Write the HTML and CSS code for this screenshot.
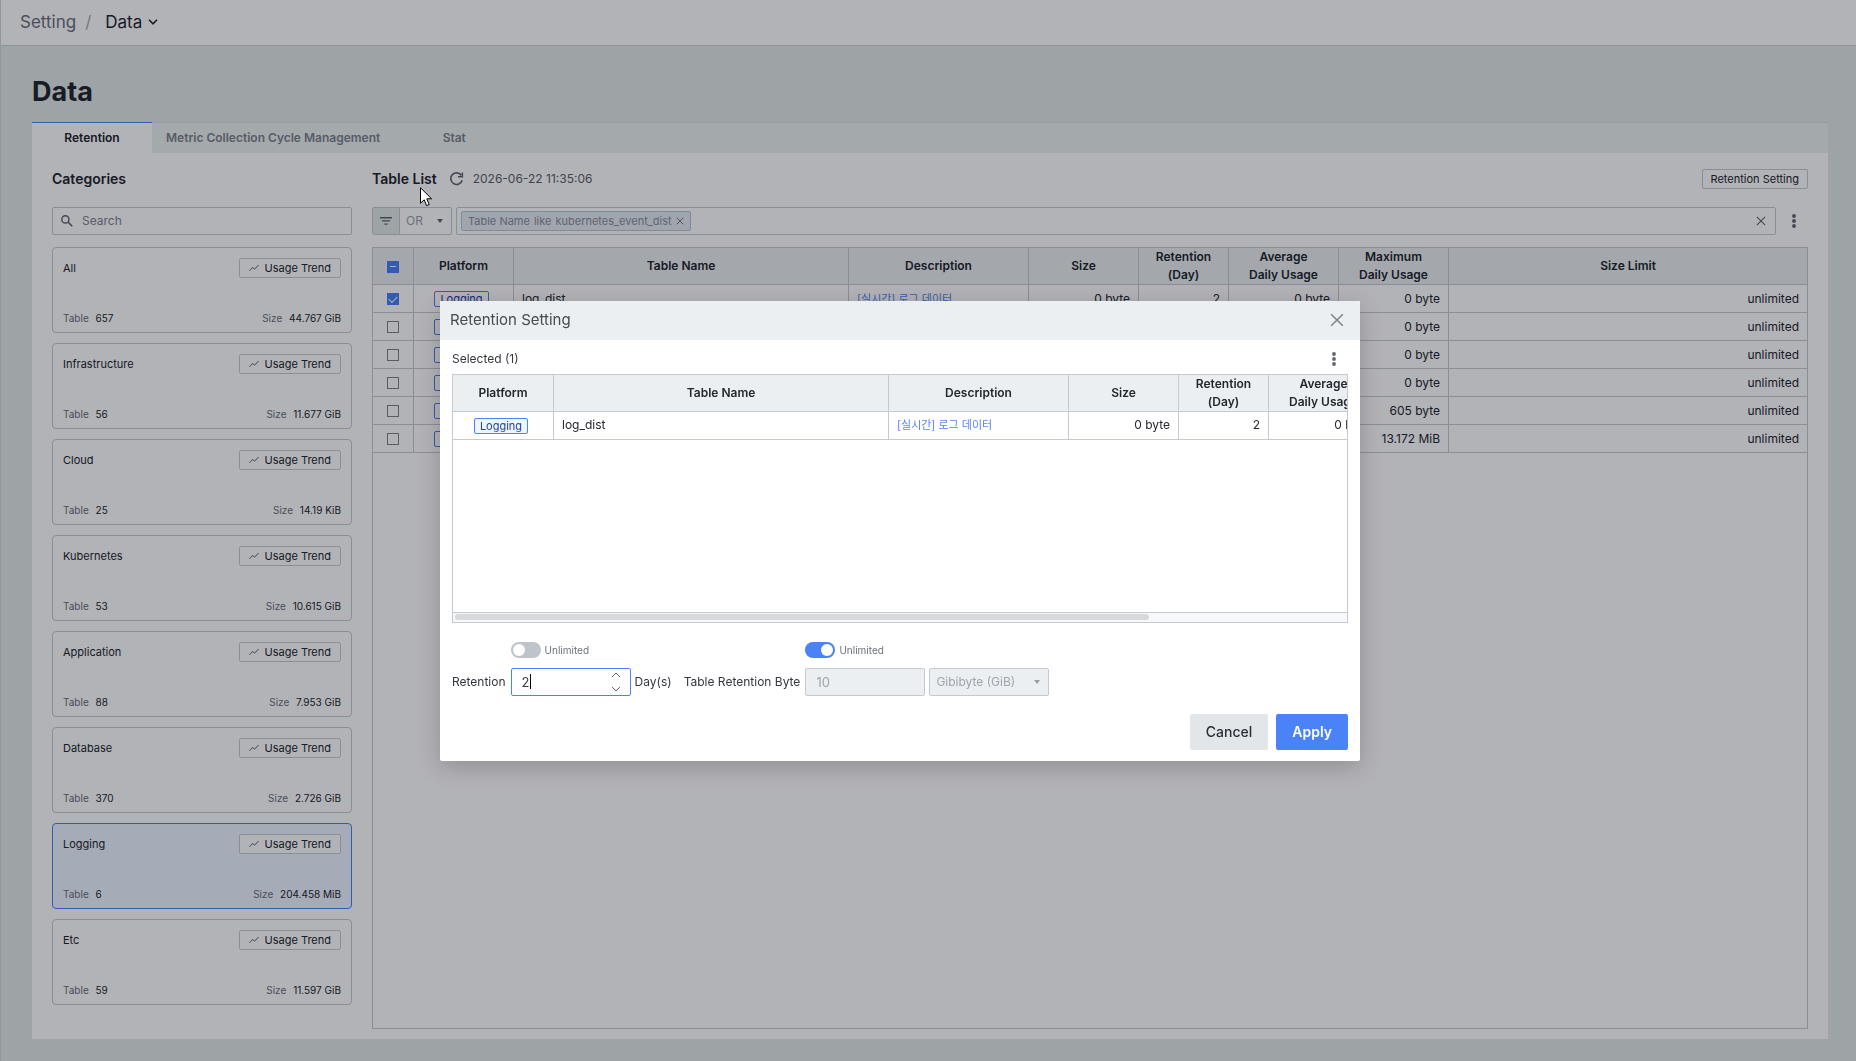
FILE: index.html
```html
<!DOCTYPE html>
<html lang="en">
<head>
  <meta charset="UTF-8">
  <meta name="viewport" content="width=device-width, initial-scale=1">
  <title>Setting / Data</title>
  <link rel="stylesheet" href="styles.css">
</head>
<body>

<svg class="symbols" aria-hidden="true">
  <symbol id="i-trend" viewBox="0 0 10 8"><path d="M0.5 6.8 L3.6 3.4 L5.6 5.2 L9.5 1" fill="none" stroke="currentColor" stroke-width="1"/></symbol>
  <symbol id="i-dots" viewBox="0 0 4 14"><circle cx="2" cy="2" r="1.9"/><circle cx="2" cy="7" r="1.9"/><circle cx="2" cy="12" r="1.9"/></symbol>
  <symbol id="i-close" viewBox="0 0 12 12"><path d="M1 1 L11 11 M11 1 L1 11" fill="none" stroke="currentColor" stroke-width="1.3"/></symbol>
  <symbol id="i-caret" viewBox="0 0 6 4"><path d="M0 0 H6 L3 4 Z"/></symbol>
</svg>

<header class="topbar">
  <a class="crumb" href="#">Setting</a>
  <span class="slash">/</span>
  <button class="crumb-current" type="button">Data
    <svg width="10" height="6" viewBox="0 0 10 6"><path d="M1 0.8 L5 4.8 L9 0.8" fill="none" stroke="currentColor" stroke-width="1.6"/></svg>
  </button>
</header>

<main class="page">
  <h1>Data</h1>

  <nav class="tabs">
    <a class="tab active" href="#">Retention</a>
    <a class="tab" href="#">Metric Collection Cycle Management</a>
    <a class="tab" href="#">Stat</a>
  </nav>

  <div class="panel">
    <section class="categories">
      <div class="title-row"><h2>Categories</h2></div>
      <label class="search">
        <svg width="12" height="12" viewBox="0 0 12 12"><circle cx="4.4" cy="4.4" r="3.6" fill="none" stroke="currentColor" stroke-width="1.4"/><path d="M7 7 L11.2 11.2" stroke="currentColor" stroke-width="1.6"/></svg>
        <input type="text" placeholder="Search" aria-label="Search categories">
      </label>

      <div class="cards">
        <article class="card">
          <div class="card-row"><h3>All</h3><button class="btn-small" type="button"><svg width="10" height="8"><use href="#i-trend"/></svg>Usage Trend</button></div>
          <div class="card-row stats"><span>Table <b>657</b></span><span>Size <b>44.767 GiB</b></span></div>
        </article>
        <article class="card">
          <div class="card-row"><h3>Infrastructure</h3><button class="btn-small" type="button"><svg width="10" height="8"><use href="#i-trend"/></svg>Usage Trend</button></div>
          <div class="card-row stats"><span>Table <b>56</b></span><span>Size <b>11.677 GiB</b></span></div>
        </article>
        <article class="card">
          <div class="card-row"><h3>Cloud</h3><button class="btn-small" type="button"><svg width="10" height="8"><use href="#i-trend"/></svg>Usage Trend</button></div>
          <div class="card-row stats"><span>Table <b>25</b></span><span>Size <b>14.19 KiB</b></span></div>
        </article>
        <article class="card">
          <div class="card-row"><h3>Kubernetes</h3><button class="btn-small" type="button"><svg width="10" height="8"><use href="#i-trend"/></svg>Usage Trend</button></div>
          <div class="card-row stats"><span>Table <b>53</b></span><span>Size <b>10.615 GiB</b></span></div>
        </article>
        <article class="card">
          <div class="card-row"><h3>Application</h3><button class="btn-small" type="button"><svg width="10" height="8"><use href="#i-trend"/></svg>Usage Trend</button></div>
          <div class="card-row stats"><span>Table <b>88</b></span><span>Size <b>7.953 GiB</b></span></div>
        </article>
        <article class="card">
          <div class="card-row"><h3>Database</h3><button class="btn-small" type="button"><svg width="10" height="8"><use href="#i-trend"/></svg>Usage Trend</button></div>
          <div class="card-row stats"><span>Table <b>370</b></span><span>Size <b>2.726 GiB</b></span></div>
        </article>
        <article class="card selected">
          <div class="card-row"><h3>Logging</h3><button class="btn-small" type="button"><svg width="10" height="8"><use href="#i-trend"/></svg>Usage Trend</button></div>
          <div class="card-row stats"><span>Table <b>6</b></span><span>Size <b>204.458 MiB</b></span></div>
        </article>
        <article class="card">
          <div class="card-row"><h3>Etc</h3><button class="btn-small" type="button"><svg width="10" height="8"><use href="#i-trend"/></svg>Usage Trend</button></div>
          <div class="card-row stats"><span>Table <b>59</b></span><span>Size <b>11.597 GiB</b></span></div>
        </article>
      </div>
    </section>

    <section class="table-list">
      <div class="title-row">
        <h2>Table List</h2>
        <button class="icon-btn refresh" type="button" aria-label="Refresh">
          <svg width="14" height="14" viewBox="0 0 14 14"><path d="M12.2 8.2 A5.8 5.8 0 1 1 11.3 3.2" fill="none" stroke="currentColor" stroke-width="1.6"/><path d="M13.1 0.4 V5.6 H7.9 V4.1 H11.6 V0.4 Z"/></svg>
        </button>
        <time>2026-06-22 11:35:06</time>
        <button class="btn-small push" type="button">Retention Setting</button>
      </div>

      <div class="filter-row">
        <div class="operator">
          <span class="filter-icon"><svg width="12" height="8" viewBox="0 0 12 8"><path d="M0 0 H12 V1.4 H0 Z M2 3.2 H10 V4.6 H2 Z M4.4 6.4 H7.6 V7.8 H4.4 Z"/></svg></span>
          <select aria-label="Operator"><option>OR</option></select>
          <svg class="select-caret" width="6" height="4"><use href="#i-caret"/></svg>
        </div>
        <div class="filter-box">
          <span class="chip"><span>Table Name</span><span>like</span><span>kubernetes_event_dist</span>
            <button class="icon-btn" type="button" aria-label="Remove filter"><svg width="8" height="8"><use href="#i-close"/></svg></button>
          </span>
          <button class="icon-btn push" type="button" aria-label="Clear filters"><svg width="10" height="10"><use href="#i-close"/></svg></button>
        </div>
        <button class="icon-btn more" type="button" aria-label="More"><svg width="4" height="14"><use href="#i-dots"/></svg></button>
      </div>

      <div class="grid">
        <table>
          <colgroup>
            <col class="c-check"><col class="c-platform"><col class="c-name"><col class="c-desc"><col class="c-usage"><col class="c-days"><col class="c-usage"><col class="c-usage"><col>
          </colgroup>
          <thead>
            <tr>
              <th><input class="some" type="checkbox" aria-label="Select all"></th>
              <th>Platform</th><th>Table Name</th><th>Description</th><th>Size</th>
              <th>Retention<br>(Day)</th><th>Average<br>Daily Usage</th><th>Maximum<br>Daily Usage</th><th>Size Limit</th>
            </tr>
          </thead>
          <tbody>
            <tr>
              <td class="center"><input type="checkbox" aria-label="Select row" checked></td>
              <td class="center"><span class="tag">Logging</span></td>
              <td>log_dist</td>
              <td><a href="#">[실시간] 로그 데이터</a></td>
              <td class="num">0 byte</td><td class="num">2</td><td class="num">0 byte</td><td class="num">0 byte</td><td class="num">unlimited</td>
            </tr>
            <tr>
              <td class="center"><input type="checkbox" aria-label="Select row"></td>
              <td class="center"><span class="tag">Logging</span></td>
              <td></td><td></td><td></td><td></td><td></td>
              <td class="num">0 byte</td><td class="num">unlimited</td>
            </tr>
            <tr>
              <td class="center"><input type="checkbox" aria-label="Select row"></td>
              <td class="center"><span class="tag">Logging</span></td>
              <td></td><td></td><td></td><td></td><td></td>
              <td class="num">0 byte</td><td class="num">unlimited</td>
            </tr>
            <tr>
              <td class="center"><input type="checkbox" aria-label="Select row"></td>
              <td class="center"><span class="tag">Logging</span></td>
              <td></td><td></td><td></td><td></td><td></td>
              <td class="num">0 byte</td><td class="num">unlimited</td>
            </tr>
            <tr>
              <td class="center"><input type="checkbox" aria-label="Select row"></td>
              <td class="center"><span class="tag">Logging</span></td>
              <td></td><td></td><td></td><td></td><td></td>
              <td class="num">605 byte</td><td class="num">unlimited</td>
            </tr>
            <tr>
              <td class="center"><input type="checkbox" aria-label="Select row"></td>
              <td class="center"><span class="tag">Logging</span></td>
              <td></td><td></td><td></td><td></td><td></td>
              <td class="num">13.172 MiB</td><td class="num">unlimited</td>
            </tr>
          </tbody>
        </table>
      </div>
    </section>
  </div>
</main>

<div class="overlay">
  <div class="modal" role="dialog" aria-labelledby="modal-title">
    <div class="modal-head">
      <h2 id="modal-title">Retention Setting</h2>
      <button class="icon-btn" type="button" aria-label="Close"><svg width="14" height="14"><use href="#i-close"/></svg></button>
    </div>

    <div class="modal-body">
      <div class="selected-row">
        <span>Selected (1)</span>
        <button class="icon-btn" type="button" aria-label="More"><svg width="4" height="14"><use href="#i-dots"/></svg></button>
      </div>

      <div class="grid modal-grid">
        <div class="grid-body">
          <table>
            <colgroup>
              <col class="c-platform"><col class="c-name"><col class="c-desc"><col class="c-usage"><col class="c-days"><col class="c-usage"><col class="c-usage"><col class="c-limit">
            </colgroup>
            <thead>
              <tr>
                <th>Platform</th><th>Table Name</th><th>Description</th><th>Size</th>
                <th>Retention<br>(Day)</th><th>Average<br>Daily Usage</th><th>Maximum<br>Daily Usage</th><th>Size Limit</th>
              </tr>
            </thead>
            <tbody>
              <tr>
                <td class="center"><span class="tag">Logging</span></td>
                <td>log_dist</td>
                <td><a href="#">[실시간] 로그 데이터</a></td>
                <td class="num">0 byte</td><td class="num">2</td><td class="num">0 byte</td><td class="num">0 byte</td><td class="num">unlimited</td>
              </tr>
            </tbody>
          </table>
        </div>
        <div class="scrollbar"><div class="thumb"></div></div>
      </div>

      <form class="form">
        <label class="field-label" for="days">Retention</label>
        <div class="field">
          <label class="toggle"><input type="checkbox">Unlimited</label>
          <div class="stepper">
            <input id="days" type="text" inputmode="numeric" value="2">
            <span class="text-cursor"></span>
            <div class="steps">
              <button type="button" aria-label="Increase"><svg width="10" height="6" viewBox="0 0 10 6"><path d="M1 5 L5 1 L9 5" fill="none" stroke="currentColor"/></svg></button>
              <button type="button" aria-label="Decrease"><svg width="10" height="6" viewBox="0 0 10 6"><path d="M1 1 L5 5 L9 1" fill="none" stroke="currentColor"/></svg></button>
            </div>
          </div>
        </div>
        <span class="field-label unit">Day(s)</span>

        <label class="field-label" for="bytes">Table Retention Byte</label>
        <div class="field">
          <label class="toggle"><input type="checkbox" checked>Unlimited</label>
          <div class="byte-row">
            <input id="bytes" type="text" value="10" disabled>
            <div class="select-wrap">
              <select aria-label="Unit" disabled><option>Gibibyte (GiB)</option></select>
              <svg class="select-caret" width="6" height="4"><use href="#i-caret"/></svg>
            </div>
          </div>
        </div>
      </form>

      <div class="actions">
        <button class="btn" type="button">Cancel</button>
        <button class="btn primary" type="button">Apply</button>
      </div>
    </div>
  </div>
</div>

<svg class="pointer" width="13" height="20" viewBox="0 0 13 20"><path d="M0.5 0.8 V16.2 L4.2 12.8 L6.6 18.6 L9.2 17.5 L6.8 11.8 H11.6 Z" fill="#fff" stroke="#000"/></svg>

</body>
</html>
```
FILE: styles.css
```css
* { margin: 0; padding: 0; box-sizing: border-box; }
body {
  font-family: Inter, "Noto Sans CJK KR", sans-serif;
  font-size: 12px;
  line-height: 18px;
  color: #24272e;
  background: #e2e8e6;
  min-height: 100vh;
  display: flex;
  flex-direction: column;
  border-left: 1px solid #d3d7d8;
}
a { color: inherit; text-decoration: none; }
button, input, select { font: inherit; color: inherit; }
button { cursor: pointer; }
svg { display: block; fill: currentColor; flex: none; }
.symbols { position: absolute; width: 0; height: 0; }

/* top bar */
.topbar {
  height: 46px;
  display: flex;
  align-items: center;
  padding: 0 19px 2px;
  background: #fff;
  border-bottom: 1px solid #cdd2d3;
  font-size: 17px;
}
.crumb { color: #6b707b; }
.slash { color: #a4a9b1; margin: 0 14px 0 9px; }
.crumb-current {
  display: flex;
  align-items: center;
  gap: 6px;
  border: none;
  background: none;
}

/* page */
.page {
  flex: 1;
  display: flex;
  flex-direction: column;
  padding: 30px 28px 22px 31px;
}
h1 {
  font-size: 27px;
  line-height: 32px;
  font-weight: 700;
  margin-bottom: 14px;
}
.tabs {
  display: flex;
  height: 31px;
  background: #ebf1f0;
}
.tab {
  min-width: 120px;
  padding: 0 14px;
  text-align: center;
  line-height: 30px;
  font-weight: 600;
  color: #7d838d;
}
.tabs, .tab { border-top: 1px solid #d9dedf; }
.tab { margin-top: -1px; }
.tab.active {
  background: #fff;
  color: #24272e;
  border-top-color: #4a83f7;
}
.panel {
  flex: 1;
  display: flex;
  gap: 20px;
  padding: 16px 20px 10px;
  background: #fff;
}
.title-row {
  display: flex;
  align-items: center;
  height: 20px;
  margin-bottom: 18px;
}
.title-row h2 { font-size: 14px; font-weight: 600; }
.title-row time { color: #5c616b; }
.push { margin-left: auto; }
.icon-btn {
  display: flex;
  align-items: center;
  justify-content: center;
  border: none;
  background: none;
  color: #5f6570;
}
.refresh { margin: 0 9px 0 13px; }
.btn-small {
  display: flex;
  align-items: center;
  gap: 5px;
  height: 20px;
  padding: 0 8px;
  border: 1px solid #c6cad0;
  border-radius: 2px;
  background: #fff;
  font-size: 11px;
}
.btn-small svg { color: #5f6570; }

/* categories */
.categories { width: 300px; flex: none; }
.search {
  display: flex;
  align-items: center;
  gap: 9px;
  height: 28px;
  padding: 0 8px;
  border: 1px solid #c6cad0;
  border-radius: 2px;
  color: #5f6570;
}
.search input {
  flex: 1;
  border: none;
  outline: none;
  background: none;
}
.search input::placeholder { color: #7d838d; }
.cards {
  display: flex;
  flex-direction: column;
  gap: 10px;
  margin-top: 12px;
}
.card {
  height: 86px;
  display: flex;
  flex-direction: column;
  justify-content: space-between;
  padding: 10px 10px 5px;
  border: 1px solid #c6cad0;
  border-radius: 4px;
}
.card.selected {
  background: #edf5ff;
  border-color: #4a83f7;
}
.card-row {
  display: flex;
  align-items: center;
  justify-content: space-between;
}
.card h3 { font-size: 11px; font-weight: 400; }
.card .btn-small { padding: 0 9px; }
.stats { font-size: 10px; color: #6b707b; }
.stats b { font-weight: 400; color: #24272e; margin-left: 4px; }

/* table list */
.table-list {
  flex: 1;
  min-width: 0;
  display: flex;
  flex-direction: column;
}
.filter-row {
  display: flex;
  gap: 4px;
  height: 28px;
  margin-bottom: 12px;
}
.operator {
  position: relative;
  display: flex;
  width: 80px;
  border: 1px solid #c6cad0;
  border-radius: 2px;
}
.filter-icon {
  display: flex;
  align-items: center;
  justify-content: center;
  width: 27px;
  border-right: 1px solid #c6cad0;
  background: #e2e8e6;
  color: #5f6570;
}
select {
  flex: 1;
  appearance: none;
  border: none;
  background: none;
  padding: 0 6px;
}
.operator select { color: #9a9fa8; }
.select-caret {
  position: absolute;
  right: 8px;
  top: 11px;
  color: #5f6570;
  pointer-events: none;
}
.filter-box {
  flex: 1;
  display: flex;
  align-items: center;
  padding: 0 9px 0 4px;
  border: 1px solid #c6cad0;
  border-radius: 2px;
}
.chip {
  display: flex;
  align-items: center;
  gap: 4px;
  height: 20px;
  padding: 0 6px;
  border: 1px solid #b9c6d6;
  border-radius: 2px;
  background: #e4ecf4;
  color: #8a909b;
  font-size: 11px;
}
.more { width: 28px; }

.grid { border: 1px solid #c6cad0; overflow: hidden; }
.table-list .grid { flex: 1; }
table {
  width: 100%;
  table-layout: fixed;
  border-collapse: separate;
  border-spacing: 0;
}
.c-check { width: 41px; }
.c-platform { width: 100px; }
.c-name { width: 335px; }
.c-desc { width: 180px; }
.c-usage { width: 110px; }
.c-days { width: 90px; }
.c-limit { width: 120px; }
th, td {
  border-right: 1px solid #c6cad0;
  border-bottom: 1px solid #c6cad0;
  white-space: nowrap;
}
th:last-child, td:last-child { border-right: none; }
th { height: 37px; background: #ebf0f1; font-weight: 600; }
td { height: 28px; padding: 0 8px; }
td a { color: #5585f5; font-size: 11px; }
.center { text-align: center; }
.num { text-align: right; }
table input {
  appearance: none;
  display: inline-block;
  vertical-align: middle;
  width: 12px;
  height: 12px;
  border: 1px solid #7d838d;
  background: #fff;
}
table input:checked, table input.some { border-color: #4a83f7; background: #4a83f7; }
table input.some::after {
  content: "";
  display: block;
  width: 6px;
  height: 1px;
  margin: 4px 2px;
  background: #fff;
}
table input:checked::after {
  content: "";
  display: block;
  width: 7px;
  height: 4px;
  margin: 2px 1px;
  border: solid #fff;
  border-width: 0 0 1px 1px;
  transform: rotate(-45deg);
}
.tag {
  display: inline-block;
  height: 16px;
  line-height: 14px;
  padding: 0 5px;
  margin-right: 4px;
  vertical-align: middle;
  border: 1px solid #4a83f7;
  border-radius: 2px;
  background: #edf5ff;
  color: #2343a8;
  font-size: 11px;
}
.table-list .tag { background: #fff; }

/* modal */
.overlay {
  position: fixed;
  inset: 0;
  display: grid;
  place-items: center;
  padding-right: 56px;
  background: rgba(0, 2, 15, 0.3);
}
.modal {
  width: 920px;
  max-width: 100%;
  background: #fff;
  border-radius: 2px;
  box-shadow: 0 6px 24px rgba(0, 0, 0, 0.2);
  color: #33373e;
}
.modal-head {
  display: flex;
  align-items: center;
  justify-content: space-between;
  height: 39px;
  padding: 0 16px 0 10px;
  background: #ebeff2;
}
.modal-head h2 { font-size: 15px; font-weight: 400; color: #474b53; }
.modal-head .icon-btn { color: #7d838d; }
.modal-body { padding: 10px 12px 11px; }
.selected-row {
  display: flex;
  justify-content: space-between;
  padding-right: 12px;
  margin-bottom: 6px;
}
.modal-grid .c-platform { width: 101px; }
.modal-grid table { width: 1156px; color: #24272e; }
.modal-grid th { background: #ebeff2; }
.grid-body { height: 237px; }
.modal-grid .tag { margin-top: 2px; }
.scrollbar {
  height: 10px;
  padding: 1px 2px;
  border-top: 1px solid #c6cad0;
  background: #f6f8fa;
}
.thumb {
  width: 78%;
  height: 6px;
  border-radius: 3px;
  background: #d6dadc;
}
.form {
  display: flex;
  align-items: flex-end;
  margin-top: 19px;
}
.field-label { line-height: 28px; margin-right: 5px; }
.unit { margin: 0 12px 0 4px; }
.field { display: flex; flex-direction: column; gap: 10px; }
.toggle {
  display: flex;
  align-items: center;
  gap: 4px;
  height: 16px;
  font-size: 10px;
  color: #6b707b;
}
.toggle input {
  appearance: none;
  width: 30px;
  height: 16px;
  padding: 2px;
  border-radius: 8px;
  background: #bfc3ca;
}
.toggle input::before {
  content: "";
  display: block;
  width: 12px;
  height: 12px;
  border-radius: 50%;
  background: #fff;
}
.toggle input:checked { background: #4a83f7; }
.toggle input:checked::before { margin-left: auto; }
.stepper {
  position: relative;
  display: flex;
  width: 120px;
  height: 28px;
  border: 1px solid #4a83f7;
  border-radius: 2px;
}
.stepper input {
  flex: 1;
  min-width: 0;
  padding-left: 10px;
  border: none;
  outline: none;
  background: none;
  font-size: 13px;
}
.text-cursor {
  position: absolute;
  left: 18px;
  top: 5px;
  width: 1px;
  height: 15px;
  background: #000;
}
.steps {
  display: flex;
  flex-direction: column;
  justify-content: space-between;
  padding: 3px 9px;
}
.steps button { border: none; background: none; color: #5f6570; }
.byte-row { display: flex; gap: 4px; }
.byte-row > input, .select-wrap {
  width: 120px;
  height: 28px;
  border: 1px solid #c6cad0;
  border-radius: 2px;
  background: #ebeff2;
  color: #a0a5ad;
}
.byte-row > input { padding-left: 10px; font-size: 13px; }
.select-wrap { position: relative; display: flex; }
.select-wrap select { opacity: 1; }
.select-wrap .select-caret { color: #9a9fa8; }
.actions {
  display: flex;
  justify-content: flex-end;
  gap: 8px;
  margin-top: 18px;
}
.btn {
  height: 36px;
  padding: 0 16px;
  border: none;
  border-radius: 2px;
  background: #e2e6e9;
  color: #2b2e35;
  font-size: 14px;
  font-weight: 500;
}
.btn.primary { background: #4a83f7; color: #fff; font-weight: 600; }

.pointer {
  position: fixed;
  left: 420px;
  top: 187px;
}
```
